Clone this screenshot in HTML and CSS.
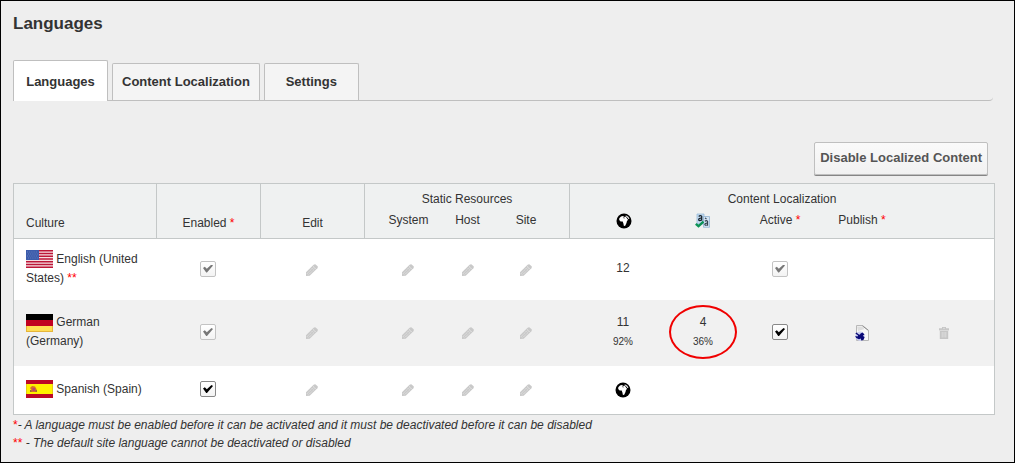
FILE: index.html
```html
<!DOCTYPE html>
<html lang="en">
<head>
<meta charset="utf-8">
<title>Languages</title>
<link rel="stylesheet" href="styles.css">
</head>
<body>
<svg class="sprite" aria-hidden="true">
  <symbol id="pencil" viewBox="0 0 12 12">
    <path fill="#c9c9c9" d="M0 12V8.300L7.600.700Q8.500 0 9.300.200L11.600 2.300Q12.200 3.200 11.400 4.300L3.700 11.700Z"/>
    <path stroke="#ededed" stroke-width=".7" stroke-dasharray="1.200 .6" fill="none" d="M2 8.700 7.800 2.900M3.400 10 9.200 4.200M.9 9.200 2.800 11.100M7.400 2.400 9.700 4.700"/>
  </symbol>
  <symbol id="globe" viewBox="0 0 16 16">
    <circle cx="8" cy="8" r="7.500" fill="#000"/>
    <path fill="#fff" d="M3.300 5.300 5 3.500 7 3.100 8.300 4 9.500 3.500 10.600 4.700 11.500 6.200 12.200 6.600 10.900 8.200 10.500 10 9.200 12.700 7.900 12.900 7.400 10.500 6.700 8.600 4.600 8.500 3.200 7.100Z"/>
    <path fill="#fff" d="M9.700 2.300 12.300 3.700 13.500 5.900 12.600 6.100 11.300 4.500 9.900 3.300Z"/>
    <path fill="#555" d="M7 4.200 9 4.800 8.600 5.400 6.900 4.900Z"/>
  </symbol>
  <symbol id="translated" viewBox="0 0 16 16">
    <path fill="#c3dcf2" stroke="#90b5d5" stroke-width=".7" d="M2 1H9V11H2Z"/>
    <path fill="#d3e4f3" stroke="#86acd0" stroke-width=".7" d="M8.500 3.500H14.500V14.300H8.500Z"/>
    <path fill="none" stroke="#17222c" stroke-width="1.300" d="M3.700 3.400Q5.300 2 6.700 3.200V7.800M6.700 5.300Q3.500 4.800 3.700 6.900Q4.500 8.500 6.700 6.800"/>
    <path fill="none" stroke="#33424f" stroke-width="1.100" d="M9.800 8.300Q11.500 7 12.600 8.300V12.700M12.600 10.200Q9.600 9.900 9.800 11.600Q10.800 13 12.600 11.600M10 4.900 11.500 6"/>
    <path fill="none" stroke="#0b9355" stroke-width="2.300" d="M.8 10.800 3.500 13.200 8.500 8.600"/>
  </symbol>
  <symbol id="publish" viewBox="0 0 16 16">
    <path fill="#f8f8f8" stroke="#b8b8b8" stroke-width="1" d="M2.500 .5H8.500L14.500 5.300V15.500H2.500Z"/>
    <path fill="#dedede" d="M3 1.500H8L10.500 4 4 6Z"/>
    <path fill="none" stroke="#888" stroke-width=".9" d="M8.300 .8 14.200 5.300"/>
    <circle cx="6" cy="11.200" r="4.700" fill="#cbd0f0"/>
    <path fill="#0a0a78" d="M1.300 8.500 2.800 7.400 4 9 5.800 9.700 6.600 8.400 8.500 7.500 10.500 9.500 8.800 10.800 10.600 12.300 9.400 15 7.300 15.500 6.800 13.400 5 14.200 2.200 13 1.200 11 3.500 11.600 4.100 10.600Z"/>
  </symbol>
  <symbol id="trash" viewBox="0 0 10 12">
    <path fill="#c6c6c6" d="M3 0H7V1.300H10V3.500H9.200V12H.8V3.500H0V1.300H3Z"/>
    <path fill="none" stroke="#e6e6e6" stroke-width=".7" d="M.3 3.400H9.700M3.200 5V10.500M5 5V10.500M6.800 5V10.500M4 1.300H6"/>
  </symbol>
  <symbol id="flag-us" viewBox="0 0 27 18">
    <path fill="#f6dfe2" d="M0 0H27V18H0Z"/>
    <path stroke="#bd1738" stroke-width="1.400" d="M0 .7H27M0 3.500H27M0 6.200H27M0 9H27M0 11.800H27M0 14.500H27M0 17.300H27"/>
    <path fill="#3c5cab" d="M0 0H13V10H0Z"/>
    <path stroke="#6e86c4" stroke-width=".8" stroke-dasharray="1 1.200" d="M1 2H12M2 4H12M1 6H12M2 8H12"/>
  </symbol>
  <symbol id="flag-de" viewBox="0 0 27 18">
    <path fill="#000" d="M0 0H27V6H0Z"/>
    <path fill="#c10020" d="M0 6H27V12H0Z"/>
    <path fill="#e5b53a" d="M0 12H27V18H0Z"/>
    <path fill="#ffdc55" d="M1 12H26V17H1Z"/>
  </symbol>
  <symbol id="flag-es" viewBox="0 0 27 18">
    <path fill="#bd0926" d="M0 0H27V18H0Z"/>
    <path fill="#e5ce12" d="M0 4H27V14H0Z"/>
    <path fill="#fff200" d="M1 4H26V14H1Z"/>
    <path fill="#d8702c" d="M4 8 6 6 9 6.500 10.500 9 11 12H4.500L5.500 10Z"/>
    <path fill="#b64b70" d="M6.500 8H9V11H6.500Z"/>
    <path fill="#9a6b35" d="M4 10H5.500V12H4ZM9.500 10H11V12H9.500Z"/>
  </symbol>
</svg>

<main class="page">
  <h1 class="title">Languages</h1>

  <nav class="tabs">
    <a class="tab tab-active" href="#languages" aria-current="page">Languages</a>
    <a class="tab" href="#localization">Content Localization</a>
    <a class="tab" href="#settings">Settings</a>
  </nav>

  <div class="actions">
    <button class="button" type="button">Disable Localized Content</button>
  </div>

  <table class="grid" id="languages">
    <colgroup>
      <col class="c-culture"><col class="c-enabled"><col class="c-edit">
      <col class="c-system"><col class="c-host"><col class="c-site">
      <col class="c-pages"><col class="c-translated"><col class="c-active"><col class="c-publish"><col class="c-delete">
    </colgroup>
    <thead>
      <tr class="head-top">
        <th class="culture tall" rowspan="2">Culture</th>
        <th class="divided tall" rowspan="2">Enabled <span class="mark">*</span></th>
        <th class="divided tall" rowspan="2">Edit</th>
        <th class="divided" colspan="3">Static Resources</th>
        <th class="divided" colspan="5">Content Localization</th>
      </tr>
      <tr class="head-sub">
        <th class="divided first">System</th>
        <th>Host</th>
        <th class="last">Site</th>
        <th class="divided first"><svg class="icon" role="img" aria-label="Pages"><use href="#globe"/></svg></th>
        <th><svg class="icon" role="img" aria-label="Translated"><use href="#translated"/></svg></th>
        <th>Active <span class="mark">*</span></th>
        <th>Publish <span class="mark">*</span></th>
        <th class="last"></th>
      </tr>
    </thead>
    <tbody>
      <tr class="row">
        <td class="culture"><svg class="flag" aria-hidden="true"><use href="#flag-us"/></svg> <span>English (United</span> <span>States)</span> <span class="mark">**</span></td>
        <td><input class="check" type="checkbox" aria-label="English enabled" checked disabled></td>
        <td><svg class="pencil"><use href="#pencil"/></svg></td>
        <td class="first"><svg class="pencil"><use href="#pencil"/></svg></td>
        <td><svg class="pencil"><use href="#pencil"/></svg></td>
        <td class="last"><svg class="pencil"><use href="#pencil"/></svg></td>
        <td class="first">12</td>
        <td></td>
        <td><input class="check" type="checkbox" aria-label="English active" checked disabled></td>
        <td></td>
        <td class="last"></td>
      </tr>
      <tr class="row row-alt">
        <td class="culture"><svg class="flag" aria-hidden="true"><use href="#flag-de"/></svg> German (Germany)</td>
        <td><input class="check" type="checkbox" aria-label="German enabled" checked disabled></td>
        <td><svg class="pencil"><use href="#pencil"/></svg></td>
        <td class="first"><svg class="pencil"><use href="#pencil"/></svg></td>
        <td><svg class="pencil"><use href="#pencil"/></svg></td>
        <td class="last"><svg class="pencil"><use href="#pencil"/></svg></td>
        <td class="first">11<span class="percent">92%</span></td>
        <td><div class="marked">4<span class="percent">36%</span></div></td>
        <td><input class="check" type="checkbox" aria-label="German active" checked></td>
        <td><svg class="icon" role="img" aria-label="Publish"><use href="#publish"/></svg></td>
        <td class="last"><svg class="trash" role="img" aria-label="Delete"><use href="#trash"/></svg></td>
      </tr>
      <tr class="row row-short">
        <td class="culture"><svg class="flag" aria-hidden="true"><use href="#flag-es"/></svg> Spanish (Spain)</td>
        <td><input class="check" type="checkbox" aria-label="Spanish enabled" checked></td>
        <td><svg class="pencil"><use href="#pencil"/></svg></td>
        <td class="first"><svg class="pencil"><use href="#pencil"/></svg></td>
        <td><svg class="pencil"><use href="#pencil"/></svg></td>
        <td class="last"><svg class="pencil"><use href="#pencil"/></svg></td>
        <td class="first"><svg class="icon" role="img" aria-label="Localize pages"><use href="#globe"/></svg></td>
        <td></td>
        <td></td>
        <td></td>
        <td class="last"></td>
      </tr>
    </tbody>
  </table>

  <div class="notes">
    <p class="note"><span class="mark">*</span>- A language must be enabled before it can be activated and it must be deactivated before it can be disabled</p>
    <p class="note"><span class="mark">**</span> - The default site language cannot be deactivated or disabled</p>
  </div>
</main>
</body>
</html>
```

FILE: styles.css
```css
*,
*::before,
*::after {
  box-sizing: border-box;
}

body {
  margin: 0;
  background: #eee;
  color: #333;
  font: 12px/19px "Liberation Sans", Arial, sans-serif;
}

.sprite {
  position: absolute;
  width: 0;
  height: 0;
}

.page {
  min-height: 100vh;
  padding: 12px 19px 8px 12px;
  border: 1px solid #000;
}

.title {
  margin: 0;
  font-size: 17px;
  line-height: 22px;
}

.tabs {
  display: flex;
  align-items: flex-end;
  gap: 4px;
  margin: 25px 2px 0 0;
  border-bottom: 1px solid #bfbfbf;
  border-bottom-right-radius: 4px;
}

.tab {
  min-width: 95px;
  padding: 8px 9px 9px;
  border: 1px solid #bfbfbf;
  border-bottom: 0;
  border-radius: 2px 2px 0 0;
  background: #f4f4f4;
  color: #333;
  font-size: 13px;
  font-weight: bold;
  line-height: 19px;
  text-align: center;
  text-decoration: none;
}

.tab-active {
  margin-bottom: -1px;
  padding: 11px 9px 10px;
  background: #fff;
}

.actions {
  display: flex;
  justify-content: flex-end;
  padding: 41px 7px 8px;
}

.button {
  padding: 5px 5px 7px;
  border: 1px solid #bfbfbf;
  border-radius: 2px;
  background: linear-gradient(#fafafa, #f1f1f1);
  box-shadow: 0 1px 0 #858585;
  color: #555;
  font: bold 13px/19px "Liberation Sans", Arial, sans-serif;
}

.grid {
  width: 100%;
  border: 1px solid #c4c8c8;
  border-spacing: 0;
  table-layout: fixed;
}

.c-culture { width: 142px; }
.c-enabled { width: 104px; }
.c-edit { width: 104px; }
.c-system { width: 74px; }
.c-host { width: 59px; }
.c-site { width: 72px; }
.c-pages { width: 94px; }
.c-translated { width: 80px; }
.c-active { width: 74px; }
.c-publish { width: 90px; }
.c-delete { width: 87px; }

.grid th,
.grid td {
  padding: 0;
  text-align: center;
  vertical-align: middle;
}

.grid td {
  padding-bottom: 2px;
}

.grid th {
  background: #eff1f1;
  font-weight: normal;
  white-space: nowrap;
}

.grid .divided {
  border-left: 1px solid #c4c8c8;
}

.grid .first {
  padding-left: 14px;
}

.grid .last {
  padding-right: 14px;
}

.head-top {
  height: 26px;
}

.grid .head-top th {
  padding-top: 4px;
}

.grid .head-sub th {
  height: 29px;
  padding-bottom: 8px;
  border-bottom: 1px solid #c4c8c8;
}

.grid .tall {
  padding-bottom: 5px;
  border-bottom: 1px solid #c4c8c8;
  vertical-align: bottom;
}

.row {
  height: 61px;
  background: #fff;
}

.row-alt {
  height: 66px;
  background: #f1f1f1;
}

.row-short {
  height: 48px;
}

.grid .culture {
  padding-right: 12px;
  padding-left: 12px;
  text-align: left;
}

.flag {
  width: 27px;
  height: 18px;
  vertical-align: middle;
}

.pencil {
  display: block;
  width: 12px;
  height: 12px;
  margin: 2px auto 0;
}

.icon {
  display: block;
  width: 16px;
  height: 16px;
  margin: 2px auto 0;
}

.trash {
  display: block;
  width: 10px;
  height: 12px;
  margin: 2px auto 0;
}

.check {
  display: block;
  appearance: none;
  width: 16px;
  height: 16px;
  margin: 0 auto;
  border: 1px solid #888;
  border-radius: 2px;
  background: linear-gradient(#fff, #f3f3f3);
}

.check:checked::before {
  content: "";
  display: block;
  width: 10px;
  height: 8px;
  margin: 3px 2px;
  background: #000;
  clip-path: polygon(0 45%, 18% 28%, 38% 52%, 85% 0, 100% 14%, 40% 100%, 32% 100%);
}

.check:disabled {
  border-color: #c3c3c3;
}

.check:disabled::before {
  background: #777;
}

.percent {
  display: block;
  font-size: 10px;
}

.marked {
  position: relative;
}

.marked::after {
  content: "";
  position: absolute;
  top: 50%;
  left: 50%;
  width: 68px;
  height: 54px;
  border: 2px solid #f00000;
  border-radius: 50%;
  transform: translate(-50%, -50%);
}

.mark {
  color: #f00;
}

.notes {
  padding-top: 1px;
}

.note {
  margin: 0;
  font-style: italic;
  line-height: 18px;
}

.note .mark {
  font-style: normal;
}
```
